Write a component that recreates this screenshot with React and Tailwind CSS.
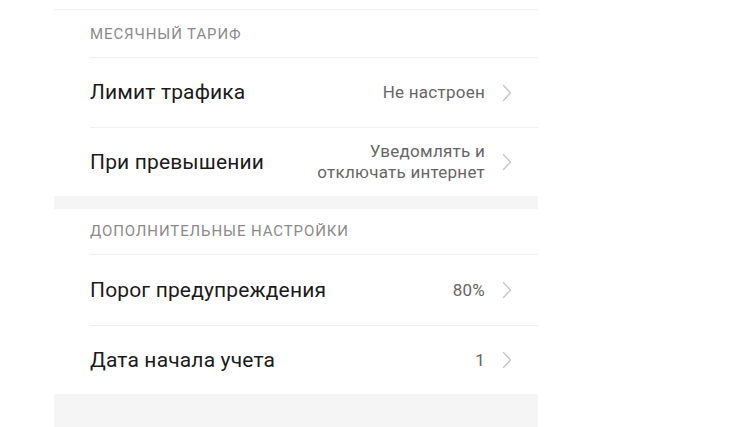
import React from "react";

const Chevron = () => (
  <svg width="10" height="18" viewBox="0 0 10 18" className="shrink-0 ml-[17px]">
    <path d="M1.5 1.5 L8.5 9 L1.5 16.5" fill="none" stroke="#c4c4c4" strokeWidth="1.3" strokeLinecap="round" strokeLinejoin="round" />
  </svg>
);

const Row = ({ title, value, h = "h-[70px]", border = true }) => (
  <div className={`flex items-center ${h} pr-[26px] ${border ? "border-t border-[#efefef]" : ""}`}>
    <div className="flex-1 text-[21px] tracking-[0.15px] text-[#1b1b1b] leading-none">{title}</div>
    <div className="text-[17px] tracking-[0.25px] text-[#666666] text-right leading-[21px]">{value}</div>
    <Chevron />
  </div>
);

export default function App() {
  return (
    <div className="w-[754px] h-[427px] bg-white overflow-hidden" style={{ fontFamily: "Roboto, 'Noto Sans', sans-serif" }}>
      <div className="ml-[54px] w-[484px] h-full flex flex-col bg-white">
        <div className="h-[10px] border-b border-[#efefef]" />
        <div className="pl-[36px]">
          <div className="h-[47px] flex items-center text-[15px] tracking-[0.9px] text-[#8a8a8a] uppercase pt-[1px]">Месячный тариф</div>
          <Row title="Лимит трафика" value="Не настроен" />
          <Row title="При превышении" value={<>Уведомлять и<br />отключать интернет</>} h="h-[69px]" />
        </div>
        <div className="h-[13px] bg-[#f5f5f5]" />
        <div className="pl-[36px]">
          <div className="h-[45px] flex items-center text-[15px] tracking-[0.9px] text-[#8a8a8a] uppercase">Дополнительные настройки</div>
          <Row title="Порог предупреждения" value="80%" h="h-[71px]" />
          <Row title="Дата начала учета" value="1" h="h-[69px]" />
        </div>
        <div className="flex-1 bg-[#f5f5f5]" />
      </div>
    </div>
  );
}
